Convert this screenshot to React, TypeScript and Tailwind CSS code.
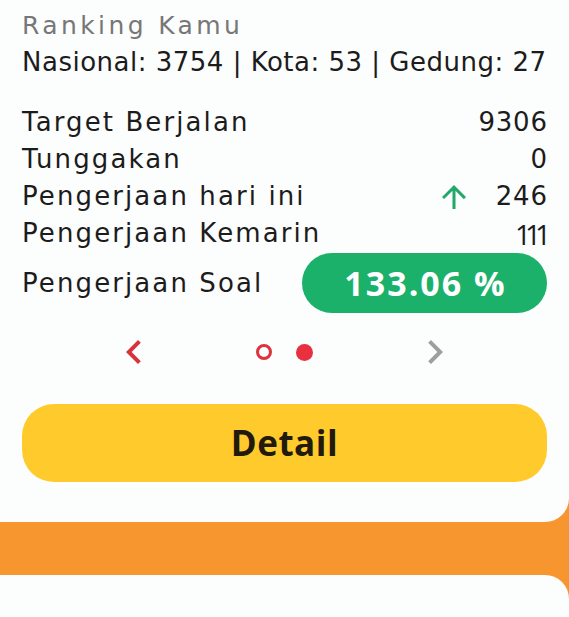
import React from "react";

const body = { fontFamily: '"DejaVu Sans", "Open Sans", sans-serif' };
const bold = { fontFamily: '"Open Sans", "Noto Sans", sans-serif' };

function Row({ label, value, arrow, valueClass, valueStyle }: { label: string; value: string; arrow?: boolean; valueClass?: string; valueStyle?: React.CSSProperties }) {
  return (
    <div className="flex items-center justify-between h-[37px]">
      <span className="tracking-[2.1px]">{label}</span>
      <span className="flex items-center">
        {arrow && (
          <svg width="36" height="36" viewBox="0 0 24 24" className="mr-[24px]">
            <path d="M4 12l1.41 1.41L11 7.83V20h2V7.83l5.58 5.59L20 12l-8-8-8 8z" fill="#22a86a" />
          </svg>
        )}
        <span className={valueClass ?? "tracking-[0.8px] mr-[-0.8px]"} style={valueStyle}>{value}</span>
      </span>
    </div>
  );
}

export default function App() {
  return (
    <div className="min-h-screen bg-[#f7962f]" style={body}>
      <div className="bg-[#fcfdfd] rounded-br-[24px] px-[22px] pt-[8px] pb-[40px] text-[#1c1c1c]">
        <div className="text-[25px] leading-[36px] text-[#777777] tracking-[3.4px]">Ranking Kamu</div>
        <div className="text-[26px] leading-[36px] tracking-[0.5px]">Nasional: 3754 | Kota: 53 | Gedung: 27</div>
        <div className="mt-[24px] text-[26px]">
          <Row label="Target Berjalan" value="9306" />
          <Row label="Tunggakan" value="0" />
          <Row label="Pengerjaan hari ini" value="246" arrow />
          <Row label="Pengerjaan Kemarin" value="111" valueClass="text-[28px] tracking-[-6px] mr-[2px]" valueStyle={bold} />
          <div className="flex items-center justify-between mt-[1px]">
            <span className="tracking-[2.1px]">Pengerjaan Soal</span>
            <div
              className="w-[245px] h-[60px] rounded-full bg-[#1bb16b] flex items-center justify-center text-white text-[34px] font-bold tracking-[2px]"
              style={bold}
            >
              <span className="mr-[-2px]">133.06 %</span>
            </div>
          </div>
        </div>
        <div className="flex items-center justify-center mt-[24px] h-[30px]">
          <svg width="48" height="48" viewBox="0 0 24 24">
            <path d="M15.41 7.41L14 6l-6 6 6 6 1.41-1.41L10.83 12z" fill="#d9323f" />
          </svg>
          <div className="flex items-center gap-[24px] mx-[98px]">
            <span className="w-[16px] h-[16px] rounded-full border-[3px] border-[#e0313e]" />
            <span className="w-[17px] h-[17px] rounded-full bg-[#e8303e]" />
          </div>
          <svg width="48" height="48" viewBox="0 0 24 24">
            <path d="M10 6L8.59 7.41 13.17 12l-4.58 4.59L10 18l6-6z" fill="#9e9e9e" />
          </svg>
        </div>
        <button
          className="mt-[37px] w-full h-[78px] rounded-[32px] bg-[#ffcb2c] text-[#221a0c] text-[35px] font-bold tracking-[0.5px]"
          style={bold}
        >
          Detail
        </button>
      </div>
      <div className="h-[53px]" />
      <div className="bg-[#fcfdfd] rounded-tr-[24px] h-[60px]" />
    </div>
  );
}
